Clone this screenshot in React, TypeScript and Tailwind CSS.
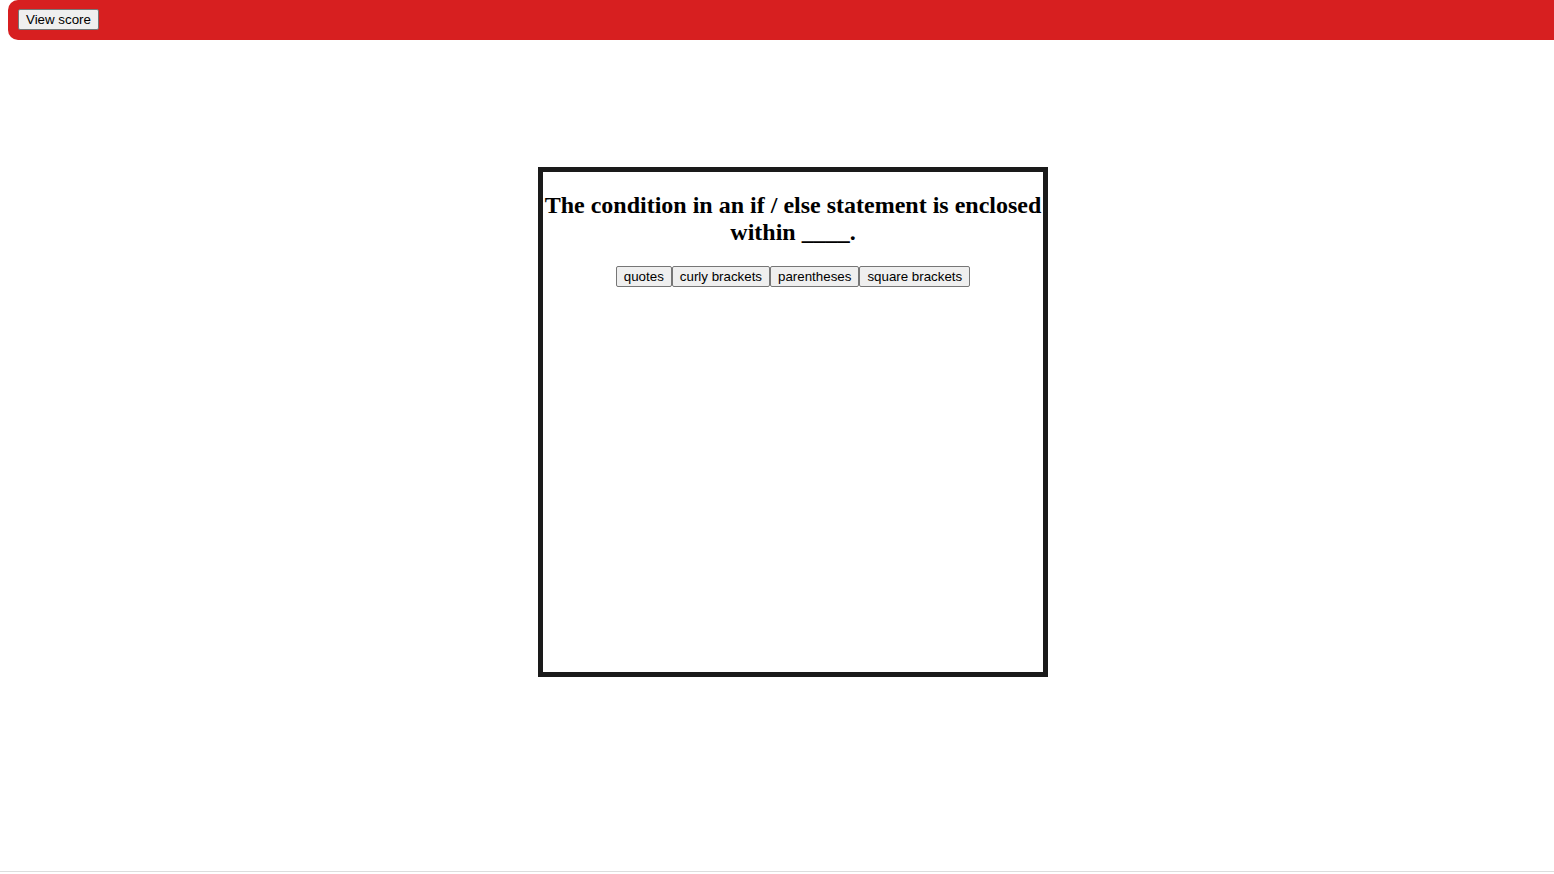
const answers = ["quotes", "curly brackets", "parentheses", "square brackets"];

export default function App() {
  return (
    <div className="flex h-[874px] flex-col bg-white font-['Liberation_Sans',Arial,sans-serif] text-black">
      <div className="ml-2 flex h-10 items-start rounded-l-[10px] bg-[#d71f20] pl-[10px] pt-[9px]">
        <button className="h-[21px] rounded-[2px] border border-[#767676] bg-[#efefef] px-[7px] text-[13.33px] leading-none">
          View score
        </button>
      </div>

      <div className="mt-[127px] flex justify-center pl-8">
        <div className="h-[510px] w-[510px] border-[5px] border-[#1a1a1a] text-center">
          <h2 className="mt-5 mb-5 font-['Liberation_Serif','Times_New_Roman',serif] text-[24px] leading-[27px] font-bold">
            The condition in an if / else statement is enclosed within ____.
          </h2>
          <div className="flex justify-center">
            {answers.map((a) => (
              <button
                key={a}
                className="h-[21px] rounded-[2px] border border-[#767676] bg-[#efefef] px-[7px] text-[13.33px] leading-none"
              >
                {a}
              </button>
            ))}
          </div>
        </div>
      </div>

      <div className="mt-auto mb-[2px] h-px bg-[#dddddd]" />
    </div>
  );
}
